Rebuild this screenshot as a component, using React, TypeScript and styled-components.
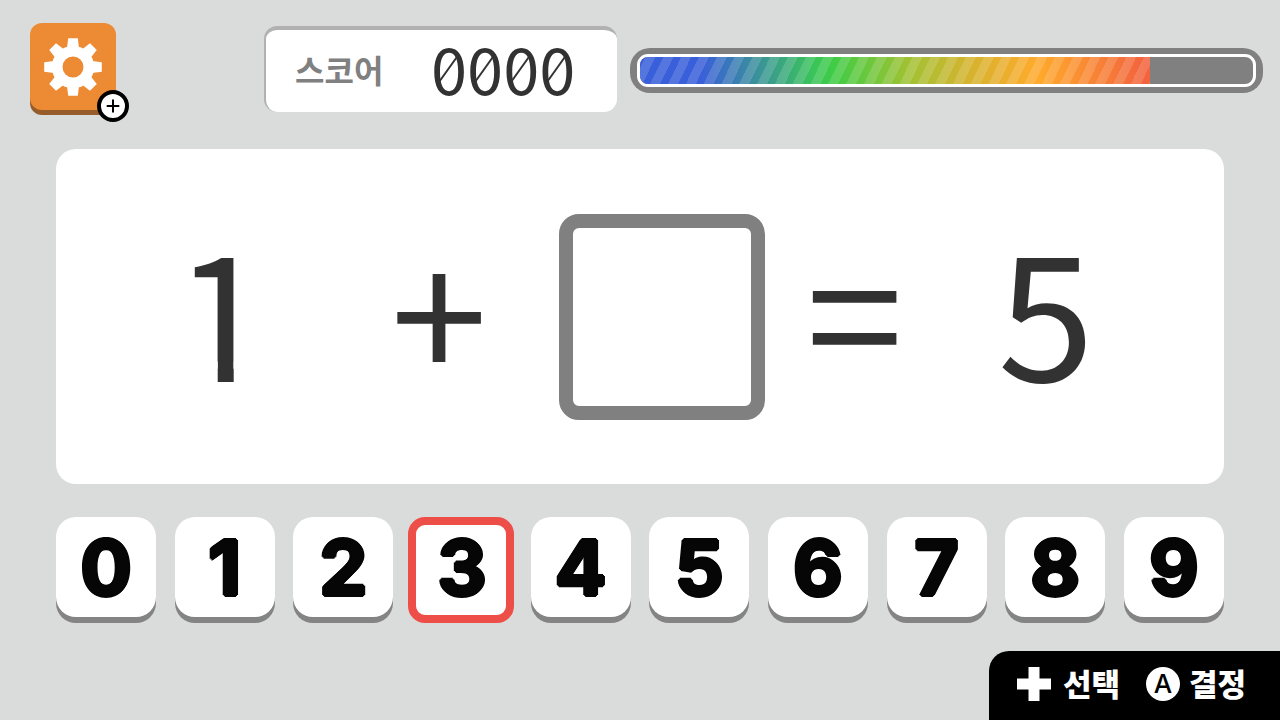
import React, { useState } from "react";
import styled, { createGlobalStyle, css } from "styled-components";

const GlobalStyle = createGlobalStyle`
  *, *::before, *::after { box-sizing: border-box; }
  body {
    margin: 0;
    background: #dadcdb;
    font-family: "Noto Sans CJK KR", "Noto Sans", sans-serif;
  }
  button { font: inherit; border: 0; padding: 0; cursor: pointer; }
`;

const Screen = styled.main`
  min-height: 100vh;
  display: flex;
  flex-direction: column;
`;

const TopBar = styled.header`
  display: flex;
  align-items: flex-start;
  padding: 23px 17px 0 30px;
`;

const SettingsButton = styled.button`
  position: relative;
  flex: none;
  width: 86px;
  height: 87px;
  margin-right: 148px;
  border-radius: 12px;
  background: #ed8b34;
  box-shadow: 0 5px 0 #965c2b;
`;

const GearSvg = styled.svg`
  display: block;
  width: 60px;
  height: 60px;
  margin: 0 auto;
`;

const PlusBadge = styled.svg`
  position: absolute;
  right: -13px;
  bottom: -12px;
  width: 32px;
  height: 32px;
`;

const ScorePanel = styled.section`
  flex: none;
  display: flex;
  align-items: center;
  width: 353px;
  height: 86px;
  margin: 3px 13px 0 0;
  padding: 0 0 4px 29px;
  border-radius: 13px;
  background: #fff;
  border: solid #b1b1b1;
  border-width: 4px 0 0 2px;
`;

const ScoreLabel = styled.span`
  width: 136px;
  color: #808080;
  font-size: 32px;
  line-height: 48px;
  font-weight: 700;
`;

const ScoreDigits = styled.span`
  display: flex;
  padding-bottom: 4px;
  color: #323232;
  font-size: 65px;
  line-height: 78px;
`;

const Digit = styled.span`
  position: relative;
`;

const Slash = styled.svg`
  position: absolute;
  inset: 0;
  width: 100%;
  height: 100%;
`;

const Meter = styled.div`
  flex: 1;
  min-width: 0;
  height: 45px;
  margin-top: 25px;
  padding: 6px 7px;
  border-radius: 20px;
  background: #808080;
`;

const MeterTrack = styled.div`
  height: 33px;
  border: 3px solid #fff;
  border-radius: 11px;
  overflow: hidden;
`;

const MeterFill = styled.div`
  height: 100%;
  background:
    repeating-linear-gradient(
      116deg,
      rgba(255, 255, 255, 0) 0 5px,
      rgba(255, 255, 255, 0.14) 5px 14px,
      rgba(255, 255, 255, 0) 14px 16px
    ),
    linear-gradient(
      90deg,
      #3a5fda 0%,
      #3a5fda 12%,
      #3ac45a 34%,
      #3fcc45 38%,
      #a3c133 53%,
      #d3b42f 64%,
      #ffaa2c 78%,
      #f2633e 99%
    );
`;

const Equation = styled.section`
  display: grid;
  grid-template-columns: 268fr 166fr 279fr 107fr 276fr;
  align-items: center;
  justify-items: center;
  height: 335px;
  margin: 37px 56px 0;
  padding: 0 40px 0 32px;
  border-radius: 20px;
  background: #fff;
`;

/* $footless trims the serif foot of the "1" so that only its stem remains */
const Term = styled.span<{ $footless?: boolean }>`
  padding-bottom: 22px;
  color: #323232;
  font-size: 174px;
  line-height: 260px;
  ${({ $footless }) =>
    $footless &&
    css`
      clip-path: polygon(
        0 0,
        100% 0,
        100% 66%,
        60px 66%,
        60px 100%,
        44px 100%,
        44px 66%,
        0 66%
      );
    `}
`;

const Answer = styled.output`
  width: 206px;
  height: 206px;
  border: 14px solid #808080;
  border-radius: 20px;
`;

const Keypad = styled.nav`
  display: flex;
  justify-content: space-between;
  margin: 33px 56px 0;
`;

const Key = styled.button<{ $selected: boolean }>`
  position: relative;
  width: 100px;
  height: 100px;
  border-radius: 20px;
  background: #fff;
  box-shadow: 0 6px 0 #848484;
  color: #060606;
  font-family: Inter, sans-serif;
  font-size: 76px;
  line-height: 100px;
  font-weight: 700;

  ${({ $selected }) =>
    $selected &&
    css`
      box-shadow: none;
      &::before {
        content: "";
        position: absolute;
        inset: 0 -2px -6px -4px;
        border: 8px solid #ee4e48;
        border-radius: 17px;
        background: #fff;
      }
    `}
`;

/* The ring of shadows thickens the digit and rounds its corners */
const KeyLabel = styled.span`
  position: relative;
  text-shadow:
    2px 0 currentColor,
    -2px 0 currentColor,
    0 2px currentColor,
    0 -2px currentColor,
    1px 1px currentColor,
    -1px 1px currentColor,
    1px -1px currentColor,
    -1px -1px currentColor;
`;

const HintBar = styled.footer`
  display: flex;
  align-items: center;
  align-self: flex-end;
  gap: 26px;
  height: 69px;
  margin-top: auto;
  padding: 0 34px 4px 28px;
  border-top-left-radius: 20px;
  background: #000;
`;

const Hint = styled.button`
  display: flex;
  align-items: center;
  gap: 12px;
  background: none;
  color: #fff;
  font-size: 31px;
  line-height: 48px;
  font-weight: 900;
`;

const HintText = styled.span`
  padding-bottom: 2px;
`;

const AButton = styled.span`
  width: 34px;
  height: 34px;
  margin-right: -3px;
  border-radius: 50%;
  background: #fff;
  color: #000;
  font-family: Inter, sans-serif;
  font-size: 26px;
  line-height: 34px;
  font-weight: 500;
  text-align: center;
`;

const Gear = () => (
  <GearSvg viewBox="-30 -30 60 60" aria-hidden="true">
    <g fill="#fff">
      {[0, 45, 90, 135, 180, 225, 270, 315].map((angle) => (
        <path key={angle} d="M-6-19 -4.8-28.8H4.8L6-19Z" transform={`rotate(${angle})`} />
      ))}
    </g>
    <circle r="15.8" fill="none" stroke="#fff" strokeWidth="10.6" />
  </GearSvg>
);

const ScoreDigit = ({ value }: { value: string }) => (
  <Digit>
    {value}
    {value === "0" && (
      <Slash viewBox="0 0 36 78" aria-hidden="true">
        <path d="M8 54 28 26" stroke="#323232" strokeWidth="2" />
      </Slash>
    )}
  </Digit>
);

export default function App() {
  const [selected, setSelected] = useState(3);

  return (
    <>
      <GlobalStyle />
      <Screen>
        <TopBar>
          <SettingsButton type="button" aria-label="설정">
            <Gear />
            <PlusBadge viewBox="0 0 32 32" aria-hidden="true">
              <circle cx="16" cy="16" r="14" fill="#fff" stroke="#000" strokeWidth="4" />
              <path d="M9.7 16h12.6M16 9.5v13" stroke="#000" strokeWidth="2" />
            </PlusBadge>
          </SettingsButton>
          <ScorePanel>
            <ScoreLabel>스코어</ScoreLabel>
            <ScoreDigits>
              {"0000".split("").map((value, i) => (
                <ScoreDigit key={i} value={value} />
              ))}
            </ScoreDigits>
          </ScorePanel>
          <Meter role="progressbar" aria-valuenow={83} aria-valuemin={0} aria-valuemax={100}>
            <MeterTrack>
              <MeterFill style={{ width: "83.2%" }} />
            </MeterTrack>
          </Meter>
        </TopBar>

        <Equation>
          <Term $footless>1</Term>
          <Term>+</Term>
          <Answer />
          <Term>=</Term>
          <Term>5</Term>
        </Equation>

        <Keypad>
          {[0, 1, 2, 3, 4, 5, 6, 7, 8, 9].map((n) => (
            <Key
              key={n}
              type="button"
              $selected={n === selected}
              aria-pressed={n === selected}
              onClick={() => setSelected(n)}
            >
              <KeyLabel>{n}</KeyLabel>
            </Key>
          ))}
        </Keypad>

        <HintBar>
          <Hint type="button">
            <svg width="34" height="34" viewBox="0 0 34 34" aria-hidden="true">
              <path d="M11.5 0h11v11.5H34v11H22.5V34h-11V22.5H0v-11h11.5Z" fill="#fff" />
            </svg>
            <HintText>선택</HintText>
          </Hint>
          <Hint type="button">
            <AButton>A</AButton>
            <HintText>결정</HintText>
          </Hint>
        </HintBar>
      </Screen>
    </>
  );
}
